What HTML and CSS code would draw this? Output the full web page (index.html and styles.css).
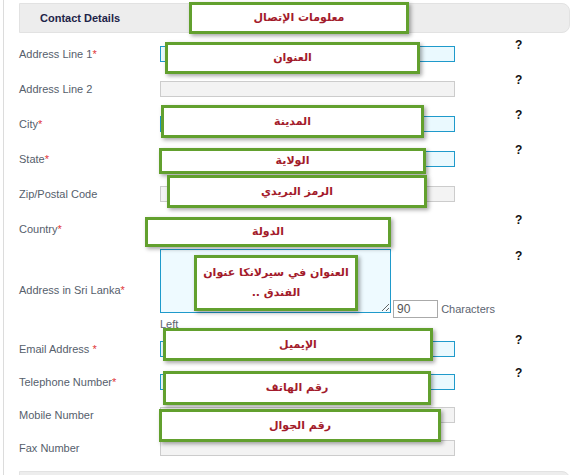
FILE: index.html
```html
<!DOCTYPE html>
<html lang="en">
<head>
  <meta charset="UTF-8" />
  <title>Contact Details</title>
  <link rel="stylesheet" href="styles.css">
</head>
<body>
  <div class="page">
    <div class="panel">
      <div class="section-head">Contact Details</div>

      <div class="row">
        <label class="lbl">Address Line 1<span class="req">*</span></label>
        <div class="field"><input class="inp must" type="text"></div>
        <span class="help">?</span>
      </div>
      <div class="row">
        <label class="lbl">Address Line 2</label>
        <div class="field"><input class="inp" type="text"></div>
        <span class="help">?</span>
      </div>
      <div class="row">
        <label class="lbl">City<span class="req">*</span></label>
        <div class="field"><input class="inp must" type="text"></div>
        <span class="help">?</span>
      </div>
      <div class="row">
        <label class="lbl">State<span class="req">*</span></label>
        <div class="field"><input class="inp must" type="text"></div>
        <span class="help">?</span>
      </div>
      <div class="row">
        <label class="lbl">Zip/Postal Code</label>
        <div class="field"><input class="inp" type="text"></div>
      </div>
      <div class="row">
        <label class="lbl">Country<span class="req">*</span></label>
        <div class="field"><input class="inp must short" type="text"></div>
        <span class="help">?</span>
      </div>
      <div class="row tall">
        <label class="lbl">Address in Sri Lanka<span class="req">*</span></label>
        <div class="field"><textarea class="area"></textarea> <input class="count" type="text" value="90"> <span class="note">Characters</span><br><span class="note">Left</span></div>
        <span class="help">?</span>
      </div>
      <div class="row low">
        <label class="lbl">Email Address <span class="req">*</span></label>
        <div class="field"><input class="inp must" type="text"></div>
        <span class="help">?</span>
      </div>
      <div class="row low">
        <label class="lbl">Telephone Number<span class="req">*</span></label>
        <div class="field"><input class="inp must" type="text"></div>
        <span class="help">?</span>
      </div>
      <div class="row low">
        <label class="lbl">Mobile Number</label>
        <div class="field"><input class="inp" type="text"></div>
      </div>
      <div class="row low">
        <label class="lbl">Fax Number</label>
        <div class="field"><input class="inp" type="text"></div>
      </div>

      <div class="section-head next"></div>
    </div>

    <!-- translation notes laid over the form -->
    <div class="note-box" style="left:189px;top:2px;width:220px;height:32px">معلومات الإتصال</div>
    <div class="note-box" style="left:165px;top:42px;width:255px;height:32px">العنوان</div>
    <div class="note-box" style="left:161px;top:105px;width:263px;height:33px">المدينة</div>
    <div class="note-box" style="left:159px;top:148px;width:267px;height:26px">الولاية</div>
    <div class="note-box" style="left:167px;top:175px;width:260px;height:33px">الرمز البريدي</div>
    <div class="note-box" style="left:145px;top:217px;width:246px;height:30px">الدولة</div>
    <div class="note-box" style="left:194px;top:255px;width:164px;height:56px">العنوان في سيرلانكا عنوان<br>الفندق ..</div>
    <div class="note-box" style="left:163px;top:328px;width:270px;height:33px">الإيميل</div>
    <div class="note-box" style="left:163px;top:371px;width:268px;height:34px">رقم الهاتف</div>
    <div class="note-box" style="left:159px;top:409px;width:282px;height:33px">رقم الجوال</div>
  </div>
</body>
</html>
```

FILE: styles.css
```css
body {
  margin: 0;
  font-family: "Liberation Sans", Arial, sans-serif;
  font-size: 11px;
  color: #56606c;
  background: #fff;
}

.page {
  position: relative;
  width: 580px;
  height: 475px;
  overflow: hidden;
}

.panel {
  margin-left: 3px;
  border-left: 1px solid #dcdcdc;
  padding: 3px 10px 0 15px;
  min-height: 480px;
}

.section-head {
  height: 28px;
  line-height: 28px;
  padding-left: 20px;
  margin-bottom: 3px;
  background: #ededed;
  border: 1px solid #e2e2e2;
  border-radius: 0 8px 8px 0;
  font-size: 11px;
  font-weight: bold;
  color: #1e2448;
}

.section-head.next {
  margin-top: 7px;
}

.row {
  display: flex;
  align-items: center;
  height: 35px;
}
.row.low {
  height: 33px;
}
.row.tall {
  height: auto;
  padding: 3px 0 1px;
}

.lbl {
  width: 141px;
  flex: none;
}
.req {
  color: #e0353a;
}

.field {
  width: 355px;
  flex: none;
  line-height: 13px;
}

.help {
  align-self: flex-start;
  margin-top: 2px;
  font-size: 12px;
  line-height: 14px;
  font-weight: bold;
  color: #111;
}
.row.tall .help {
  margin-top: 0;
}
.row.low .help {
  margin-top: 1px;
}

.inp {
  box-sizing: border-box;
  display: block;
  width: 295px;
  height: 16px;
  margin: 0;
  padding: 0 3px;
  border: 1px solid #cccccc;
  background: #f3f3f3;
  font: 11px "Liberation Sans", Arial, sans-serif;
}
.inp.must {
  border-color: #1f9acb;
  background: #eaf9fe;
}
.inp.short {
  width: 200px;
}

.area {
  box-sizing: border-box;
  width: 231px;
  height: 64px;
  margin: 0;
  padding: 2px;
  border: 1px solid #1f9acb;
  background: #eefaff;
  font: 11px "Liberation Sans", Arial, sans-serif;
}

.count {
  box-sizing: border-box;
  width: 45px;
  height: 18px;
  margin: 0 0 0 -1px;
  padding: 0 3px;
  border: 1px solid #aaaaaa;
  background: #fff;
  font: 12px "Liberation Sans", Arial, sans-serif;
  color: #555;
}

.note {
  font-size: 11px;
  color: #5c6470;
}

.note-box {
  position: absolute;
  box-sizing: border-box;
  display: flex;
  align-items: center;
  justify-content: center;
  padding: 0 4px;
  border: 3px solid #62a02e;
  background: #fff;
  box-shadow: 2px 2px 4px rgba(0, 0, 0, 0.35);
  direction: rtl;
  text-align: center;
  white-space: nowrap;
  font-family: "DejaVu Sans", sans-serif;
  font-size: 11px;
  font-weight: bold;
  line-height: 20px;
  color: #a31b2b;
}
```
